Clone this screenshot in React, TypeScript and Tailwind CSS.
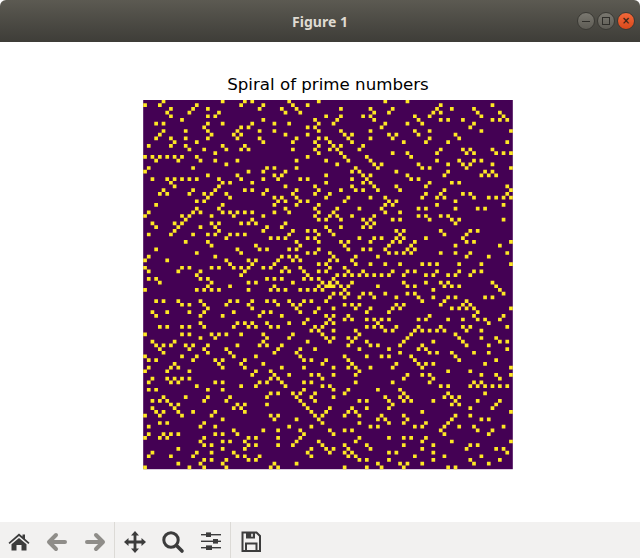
import { Fragment } from "react";

const SIZE = 100;
const CELL = 369.6 / SIZE;
const LEFT = 143.2;
const TOP = 99.6;

function isPrime(n: number) {
  if (n < 2) return false;
  for (let d = 2; d * d <= n; d++) {
    if (n % d === 0) return false;
  }
  return true;
}

// walk the spiral out from 2 in the middle: left, up, right, down
function spiralPath() {
  let d = "";
  let x = 50;
  let y = 50;
  let dx = -1;
  let dy = 0;
  let leg = 1;
  let n = 2;
  while (n < SIZE * SIZE + 2) {
    for (let turn = 0; turn < 2; turn++) {
      for (let s = 0; s < leg && n < SIZE * SIZE + 2; s++) {
        if (isPrime(n) && x >= 0 && y >= 0 && x < SIZE && y < SIZE) {
          d += `M${LEFT + x * CELL} ${TOP + y * CELL}h${CELL}v${CELL}h${-CELL}z`;
        }
        x += dx;
        y += dy;
        n++;
      }
      [dx, dy] = [-dy, dx];
    }
    leg++;
  }
  return d;
}

const SpiralPlot = () => (
  <svg width="370" height="370" viewBox="143 100 370 370" className="block">
    <rect x={LEFT} y={TOP} width="369.6" height="369.6" fill="#440154" />
    <path d={spiralPath()} fill="#fde725" />
  </svg>
);

const WindowButton = ({ close, children }: { close?: boolean; children: React.ReactNode }) => (
  <div
    className={
      close
        ? "w-[18px] h-[18px] rounded-full flex items-center justify-center border border-[#3a3934] bg-gradient-to-b from-[#f2683a] to-[#d9491a]"
        : "w-[18px] h-[18px] rounded-full flex items-center justify-center border border-[#3a3934] bg-gradient-to-b from-[#7a7870] to-[#5e5c55]"
    }
  >
    {children}
  </div>
);

const HomeIcon = () => (
  <svg width="24" height="24" viewBox="0 0 24 24" fill="#3c3c3c">
    <path d="M12 3.5 L15.5 6.6 V4.5 H18 V8.8 L22.5 12.8 L21.4 14 L12 6 L2.6 14 L1.5 12.8 Z" />
    <path d="M12 8 L19.5 14.2 V20.5 H14.5 V15 H9.5 V20.5 H4.5 V14.2 Z" />
  </svg>
);

const ArrowIcon = ({ flip }: { flip?: boolean }) => (
  <svg width="24" height="24" viewBox="0 0 24 24" className={flip ? "-scale-x-100" : ""}>
    <path d="M11 5 L4 12 L11 19 M5 12 H20" fill="none" stroke="#8f8d89" strokeWidth="4" strokeLinecap="round" strokeLinejoin="round" />
  </svg>
);

const MoveIcon = () => (
  <svg width="24" height="24" viewBox="0 0 24 24" fill="#3c3c3c">
    <path d="M12 1 L16 5.5 H13.4 V10.6 H18.5 V8 L23 12 L18.5 16 V13.4 H13.4 V18.5 H16 L12 23 L8 18.5 H10.6 V13.4 H5.5 V16 L1 12 L5.5 8 V10.6 H10.6 V5.5 H8 Z" />
  </svg>
);

const SearchIcon = () => (
  <svg width="24" height="24" viewBox="0 0 24 24" fill="none" stroke="#3c3c3c">
    <circle cx="10" cy="10" r="7.2" strokeWidth="3" />
    <path d="M15.5 15.5 L21 21" strokeWidth="3.6" strokeLinecap="round" />
  </svg>
);

const SlidersIcon = () => (
  <svg width="24" height="24" viewBox="0 0 24 24" fill="#3c3c3c">
    <rect x="2" y="4" width="20" height="1.4" />
    <rect x="2" y="10.6" width="20" height="1.4" />
    <rect x="2" y="17" width="20" height="1.4" />
    <rect x="7" y="2.4" width="5" height="4.6" />
    <rect x="14" y="9" width="5" height="4.6" />
    <rect x="7" y="15.4" width="6" height="4.6" />
  </svg>
);

const SaveIcon = () => (
  <svg width="24" height="24" viewBox="0 0 24 24" fill="none" stroke="#3c3c3c" strokeWidth="2">
    <path d="M3.5 2.5 H17.5 L21 6 V21 H3.5 Z" />
    <path d="M7 2.5 H16 V8.5 H7 Z" fill="#3c3c3c" stroke="none" />
    <path d="M13 3.8 V6.8" stroke="#f2f1f0" strokeWidth="1.6" />
    <path d="M7 21 V13.5 H17.5 V21" />
  </svg>
);

const toolGroups = [
  [<HomeIcon />, <ArrowIcon />, <ArrowIcon flip />],
  [<MoveIcon />, <SearchIcon />, <SlidersIcon />],
  [<SaveIcon />],
];

export default function App() {
  return (
    <div className="w-[640px] h-[558px] flex flex-col bg-white overflow-hidden" style={{ fontFamily: "'DejaVu Sans', sans-serif" }}>
      <div className="h-[42px] shrink-0 relative flex items-center justify-center rounded-t-[6px] bg-gradient-to-b from-[#5c5a52] to-[#3e3d38]">
        <span className="text-[14px] font-bold text-[#dfdbd2] font-['Noto_Sans',sans-serif]">Figure 1</span>
        <div className="absolute right-[5px] top-[12px] flex gap-[2px]">
          <WindowButton>
            <div className="w-[8px] h-[1px] bg-[#2f2e2a]" />
          </WindowButton>
          <WindowButton>
            <div className="w-[8px] h-[8px] border border-[#2f2e2a]" />
          </WindowButton>
          <WindowButton close>
            <span className="text-[10px] leading-none text-[#3a2416] font-bold">×</span>
          </WindowButton>
        </div>
      </div>

      <div className="flex-1 pl-[143px] pt-[30px]">
        <div className="w-[370px] flex flex-col items-center">
          <div className="h-[28px] text-[16.67px] leading-[25px] text-black">Spiral of prime numbers</div>
          <SpiralPlot />
        </div>
      </div>

      <div className="h-[36px] shrink-0 flex bg-[#f2f1f0]">
        {toolGroups.map((tools, g) => (
          <Fragment key={g}>
            {g > 0 && <div className="w-[2px] border-l border-[#dcdad6]" />}
            <div className="flex">
              {tools.map((icon, i) => (
                <div key={i} className="w-[38px] h-[36px] pt-[3px] flex items-center justify-center">
                  {icon}
                </div>
              ))}
            </div>
          </Fragment>
        ))}
      </div>
    </div>
  );
}
